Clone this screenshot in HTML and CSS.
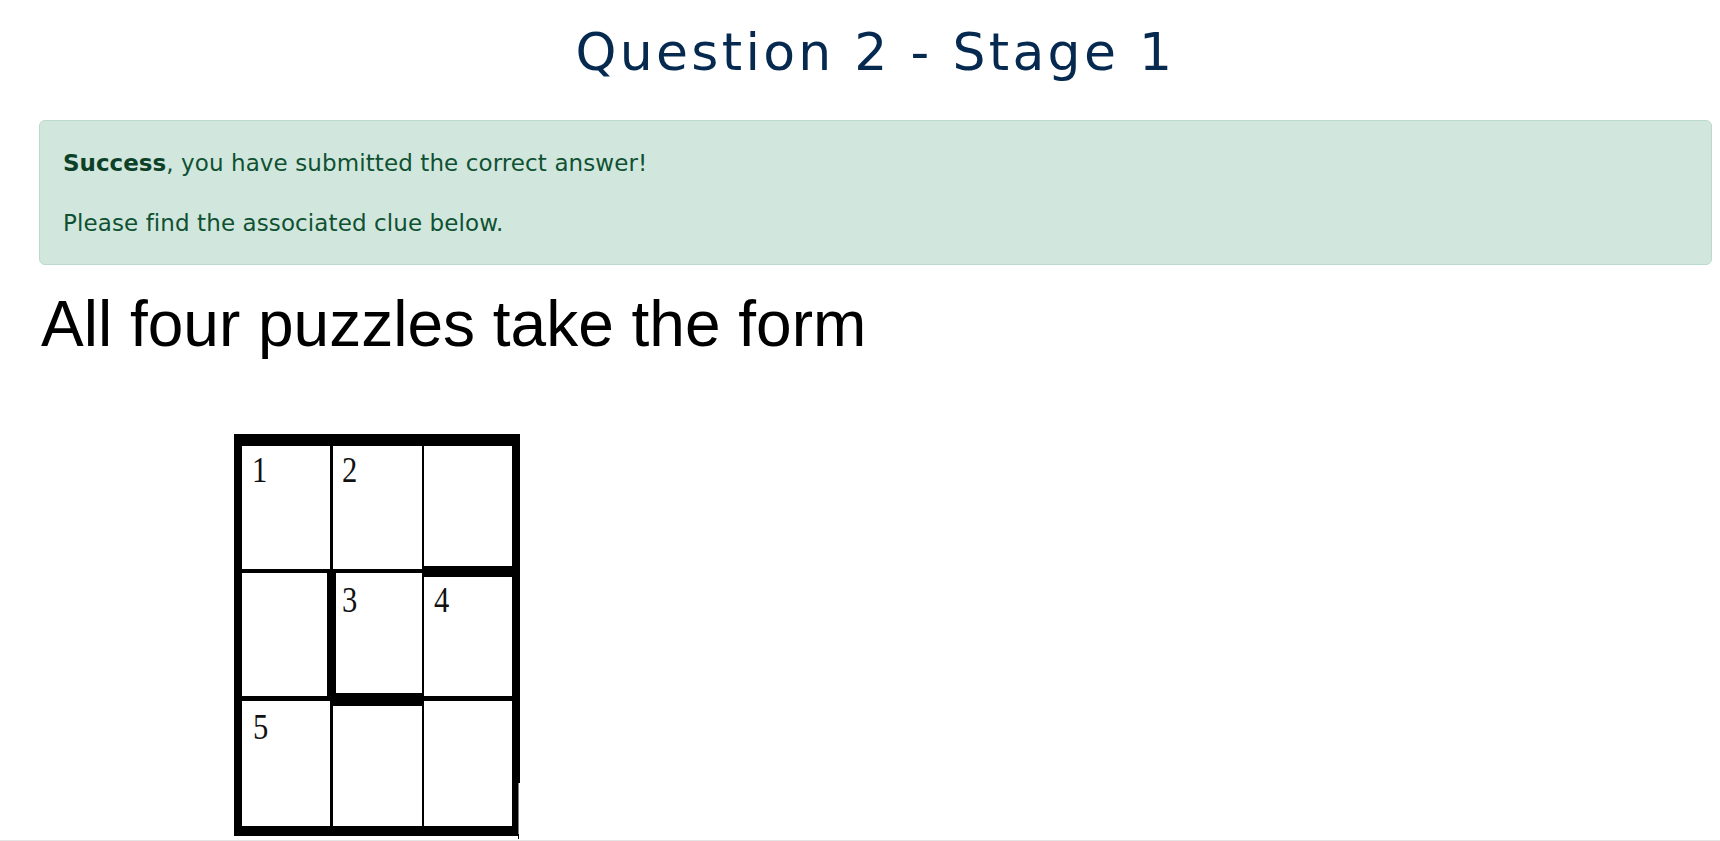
FILE: index.html
```html
<!DOCTYPE html>
<html lang="en">
<head>
<meta charset="utf-8">
<title>Question 2 - Stage 1</title>
<link rel="stylesheet" href="styles.css">
</head>
<body>
<main class="page">
  <h1 class="title">Question 2 - Stage 1</h1>
  <div class="alert">
    <p class="alert-line"><strong>Success</strong>, you have submitted the correct answer!</p>
    <p class="alert-line">Please find the associated clue below.</p>
  </div>
  <section class="clue">
    <p class="clue-text">All four puzzles take the form</p>
    <div class="grid-wrap">
      <svg class="grid" width="286" height="405" viewBox="0 0 286 405" xmlns="http://www.w3.org/2000/svg">
        <rect x="0" y="0" width="286" height="349" fill="#000"/>
        <rect x="0" y="348" width="284.5" height="54" fill="#000"/>
        <rect x="284" y="400" width="1" height="5" fill="#000"/>
        <g fill="#fff">
          <rect x="8" y="12" width="88" height="123"/>
          <rect x="99" y="12" width="89" height="123"/>
          <rect x="190" y="12" width="88" height="120"/>
          <rect x="8" y="139" width="85" height="123"/>
          <rect x="102" y="139" width="86" height="120"/>
          <rect x="190" y="143" width="88" height="119"/>
          <rect x="8" y="267" width="88" height="125"/>
          <rect x="99" y="272" width="89" height="120"/>
          <rect x="190" y="267" width="88" height="125"/>
        </g>
        <g class="num">
          <text transform="translate(18 48) scale(0.85 1)">1</text>
          <text transform="translate(108 48) scale(0.85 1)">2</text>
          <text transform="translate(108 178) scale(0.85 1)">3</text>
          <text transform="translate(200 178) scale(0.85 1)">4</text>
          <text transform="translate(19 305) scale(0.85 1)">5</text>
        </g>
      </svg>
    </div>
  </section>
</main>
<div class="bottom-rule"></div>
</body>
</html>
```
FILE: styles.css
```css
html, body {
  margin: 0;
  padding: 0;
  background: #fff;
}

body {
  font-family: "DejaVu Sans", "Noto Sans", sans-serif;
  height: 841px;
  overflow: hidden;
}

.page {
  padding: 0 8px 0 39px;
}

.title {
  margin: 21px 0 0;
  font-size: 52px;
  line-height: 62px;
  font-weight: 400;
  letter-spacing: 3.3px;
  text-align: center;
  color: #062a4f;
}

.alert {
  margin-top: 37px;
  background: #d1e7dd;
  border: 1px solid #badbcc;
  border-radius: 6px;
  padding: 27px 23px 0;
  color: #0f5132;
  font-size: 23px;
  line-height: 31px;
  letter-spacing: 0.1px;
  height: 145px;
  box-sizing: border-box;
}

.alert-line {
  margin: 0;
}

.alert-line + .alert-line {
  margin-top: 29px;
}

.alert strong {
  font-weight: 700;
  letter-spacing: 0;
  color: #0c4128;
}

.clue {
  margin-top: 23px;
}

.clue-text {
  margin: 0;
  font-family: "Liberation Sans", Arial, sans-serif;
  font-size: 64px;
  line-height: 73px;
  color: #000;
  padding-left: 2px;
}

.grid-wrap {
  margin-top: 73px;
  padding-left: 195px;
  height: 406px;
}

.grid {
  display: block;
}

.num text {
  font-family: "Liberation Serif", "Times New Roman", serif;
  font-size: 36px;
  fill: #111;
}

.bottom-rule {
  border-top: 1px solid #e4e4e4;
}
```
